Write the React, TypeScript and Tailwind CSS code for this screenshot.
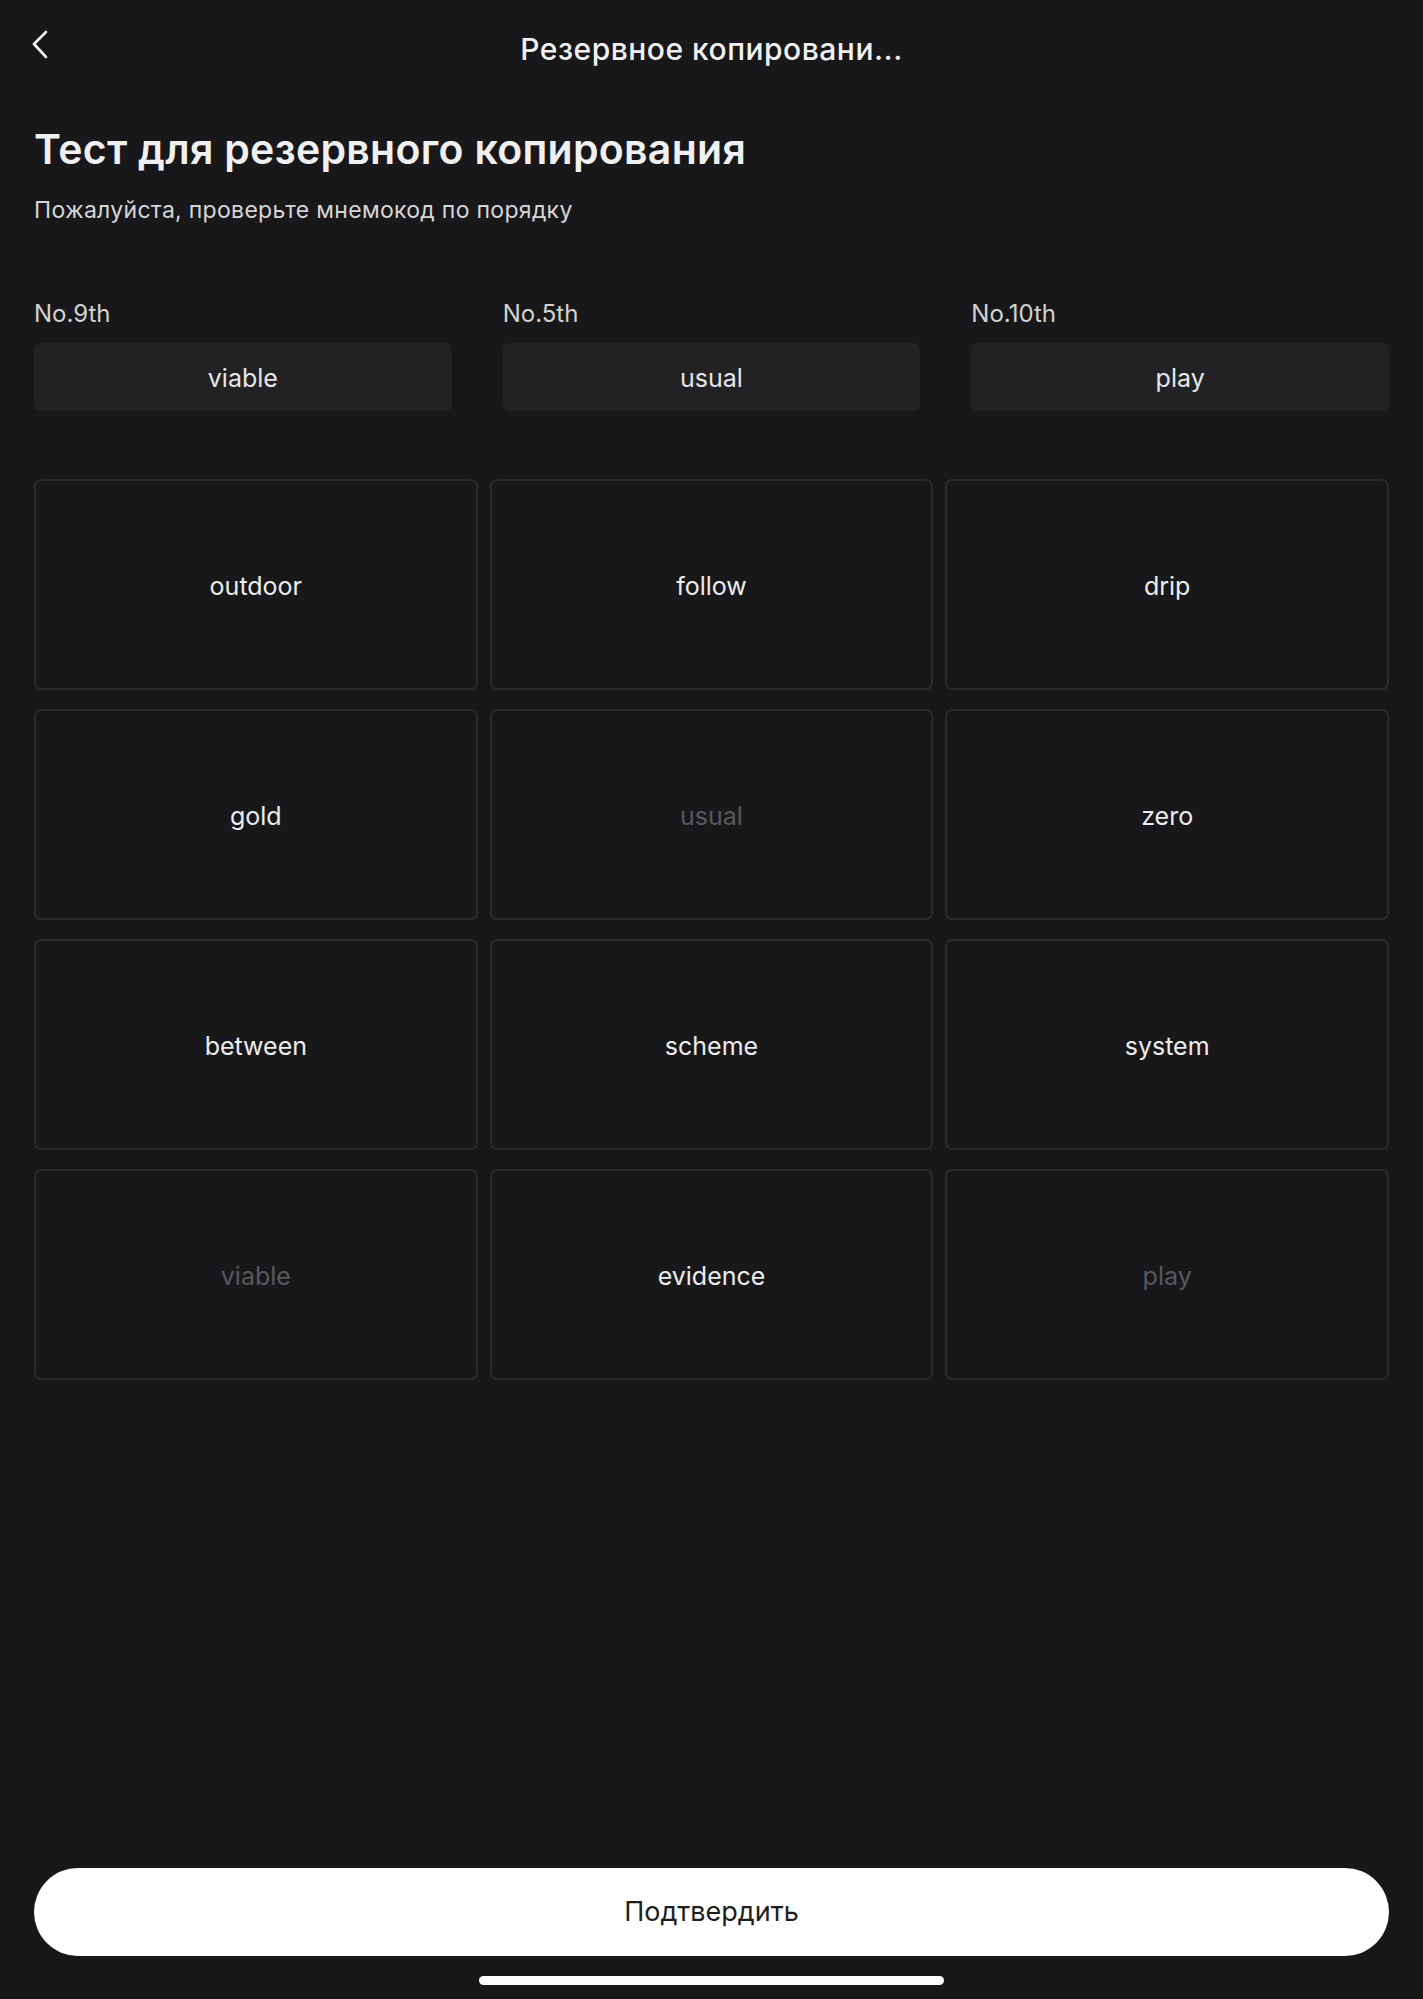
import React from "react";

interface Slot {
  label: string;
  word: string;
}

interface Tile {
  word: string;
  used: boolean;
}

const slots: Slot[] = [
  { label: "No.9th", word: "viable" },
  { label: "No.5th", word: "usual" },
  { label: "No.10th", word: "play" },
];

const tiles: Tile[] = [
  { word: "outdoor", used: false },
  { word: "follow", used: false },
  { word: "drip", used: false },
  { word: "gold", used: false },
  { word: "usual", used: true },
  { word: "zero", used: false },
  { word: "between", used: false },
  { word: "scheme", used: false },
  { word: "system", used: false },
  { word: "viable", used: true },
  { word: "evidence", used: false },
  { word: "play", used: true },
];

const BackIcon = () => (
  <svg width="20" height="32" viewBox="0 0 20 32" fill="none">
    <path
      d="M15 3 L3 15 L15 28"
      stroke="#f2f2f2"
      strokeWidth="2.6"
      strokeLinecap="round"
      strokeLinejoin="round"
    />
  </svg>
);

export default function App() {
  return (
    <div className="w-[1423px] min-h-[1999px] bg-[#18181b] flex flex-col font-['Inter','Noto_Sans',sans-serif] text-[#ececec]">
      {/* Top bar */}
      <header className="relative h-[96px] flex items-center justify-center">
        <button className="absolute left-[31px] top-[29px]">
          <BackIcon />
        </button>
        <h1 className="pt-[2px] text-[30px] font-medium tracking-[0.5px] text-[#f0f0f0]">
          Резервное копировани...
        </h1>
      </header>

      <main className="flex-1 flex flex-col px-[34px]">
        <h2 className="mt-[30px] text-[41px] leading-[46px] font-semibold tracking-[0.3px] text-[#f0f0f0]">
          Тест для резервного копирования
        </h2>
        <p className="mt-[24px] text-[23px] leading-[28px] tracking-[0.3px] text-[#d6d6d6]">
          Пожалуйста, проверьте мнемокод по порядку
        </p>

        {/* Selected words */}
        <div className="mt-[76px] grid grid-cols-3 gap-x-[51px]">
          {slots.map((slot) => (
            <div key={slot.label} className="flex flex-col">
              <span className="text-[24px] leading-[28px] text-[#d2d2d2]">
                {slot.label}
              </span>
              <div className="mt-[15px] h-[68px] pt-[4px] rounded-[6px] bg-[#222225] flex items-center justify-center text-[25px] text-[#e6e6e6]">
                {slot.word}
              </div>
            </div>
          ))}
        </div>

        {/* Word choices */}
        <div className="mt-[68px] grid grid-cols-3 gap-x-[12px] gap-y-[19px]">
          {tiles.map((tile) => (
            <div
              key={tile.word + (tile.used ? "-used" : "")}
              className={`h-[211px] pt-[5px] rounded-[7px] border-2 border-[#2b2b2e] flex items-center justify-center text-[25px] ${
                tile.used ? "text-[#58585c]" : "text-[#ececec]"
              }`}
            >
              {tile.word}
            </div>
          ))}
        </div>

        <div className="flex-1" />

        <button className="h-[88px] w-full rounded-full bg-white text-[#1e1e1e] text-[27px]">
          Подтвердить
        </button>
      </main>

      {/* Home indicator */}
      <div className="flex justify-center pt-[20px] pb-[14px]">
        <div className="h-[9px] w-[465px] rounded-full bg-white" />
      </div>
    </div>
  );
}
